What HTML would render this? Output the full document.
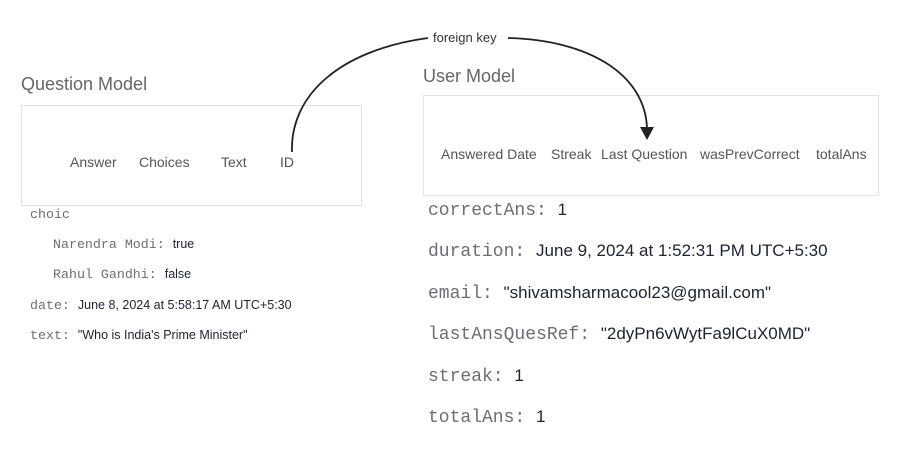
<!DOCTYPE html>
<html><head><meta charset="utf-8"><style>
body{margin:0;width:922px;height:460px;background:#fff;position:relative;overflow:hidden;font-family:"Liberation Sans",sans-serif}
.a{position:absolute;white-space:nowrap}
.t{color:#666;font-size:18px}
.box{position:absolute;border:1px solid #e3e3e3;background:#fff}
.h{color:#555;font-size:14px}
.k{font-family:"Liberation Mono",monospace;color:#6a6f75}
.v{color:#1c2430}
.L{font-size:13.3px}.L .v{font-size:12.5px}
.R{font-size:18px}.R .v{font-size:17px}
</style></head><body>
<div class="a t" style="left:21px;top:74px">Question Model</div>
<div class="box" style="left:21px;top:105px;width:339px;height:99px"></div>
<div class="a h" style="left:70px;top:154px">Answer</div>
<div class="a h" style="left:139px;top:154px">Choices</div>
<div class="a h" style="left:221px;top:154px">Text</div>
<div class="a h" style="left:280px;top:154px">ID</div>
<div class="a L" style="left:30px;top:206px"><span class="k">choic</span></div>
<div class="a L" style="left:53px;top:236px"><span class="k">Narendra Modi: </span><span class="v">true</span></div>
<div class="a L" style="left:53px;top:266px"><span class="k">Rahul Gandhi: </span><span class="v">false</span></div>
<div class="a L" style="left:30px;top:297px"><span class="k">date: </span><span class="v">June 8, 2024 at 5:58:17 AM UTC+5:30</span></div>
<div class="a L" style="left:30px;top:327px"><span class="k">text: </span><span class="v">"Who is India's Prime Minister"</span></div>

<div class="a t" style="left:423px;top:66px">User Model</div>
<div class="box" style="left:423px;top:95px;width:454px;height:99px"></div>
<div class="a h" style="left:441px;top:146px">Answered Date</div>
<div class="a h" style="left:551px;top:146px">Streak</div>
<div class="a h" style="left:601px;top:146px">Last Question</div>
<div class="a h" style="left:700px;top:146px">wasPrevCorrect</div>
<div class="a h" style="left:816px;top:146px">totalAns</div>
<div class="a R" style="left:428px;top:199px"><span class="k">correctAns: </span><span class="v">1</span></div>
<div class="a R" style="left:428px;top:240px"><span class="k">duration: </span><span class="v">June 9, 2024 at 1:52:31 PM UTC+5:30</span></div>
<div class="a R" style="left:428px;top:282px"><span class="k">email: </span><span class="v">"shivamsharmacool23@gmail.com"</span></div>
<div class="a R" style="left:428px;top:323px"><span class="k">lastAnsQuesRef: </span><span class="v">"2dyPn6vWytFa9lCuX0MD"</span></div>
<div class="a R" style="left:428px;top:365px"><span class="k">streak: </span><span class="v">1</span></div>
<div class="a R" style="left:428px;top:406px"><span class="k">totalAns: </span><span class="v">1</span></div>

<div class="a" style="left:433px;top:30px;font-size:13px;color:#333">foreign key</div>
<svg class="a" style="left:0;top:0" width="922" height="460">
<path d="M292 152 C290 95 340 50 428 38" fill="none" stroke="#222" stroke-width="1.8"/>
<path d="M508 38 C590 40 645 75 647 128" fill="none" stroke="#222" stroke-width="1.8"/>
<path d="M640 127 L654 127 L647 140 Z" fill="#222"/>
</svg>
</body></html>
